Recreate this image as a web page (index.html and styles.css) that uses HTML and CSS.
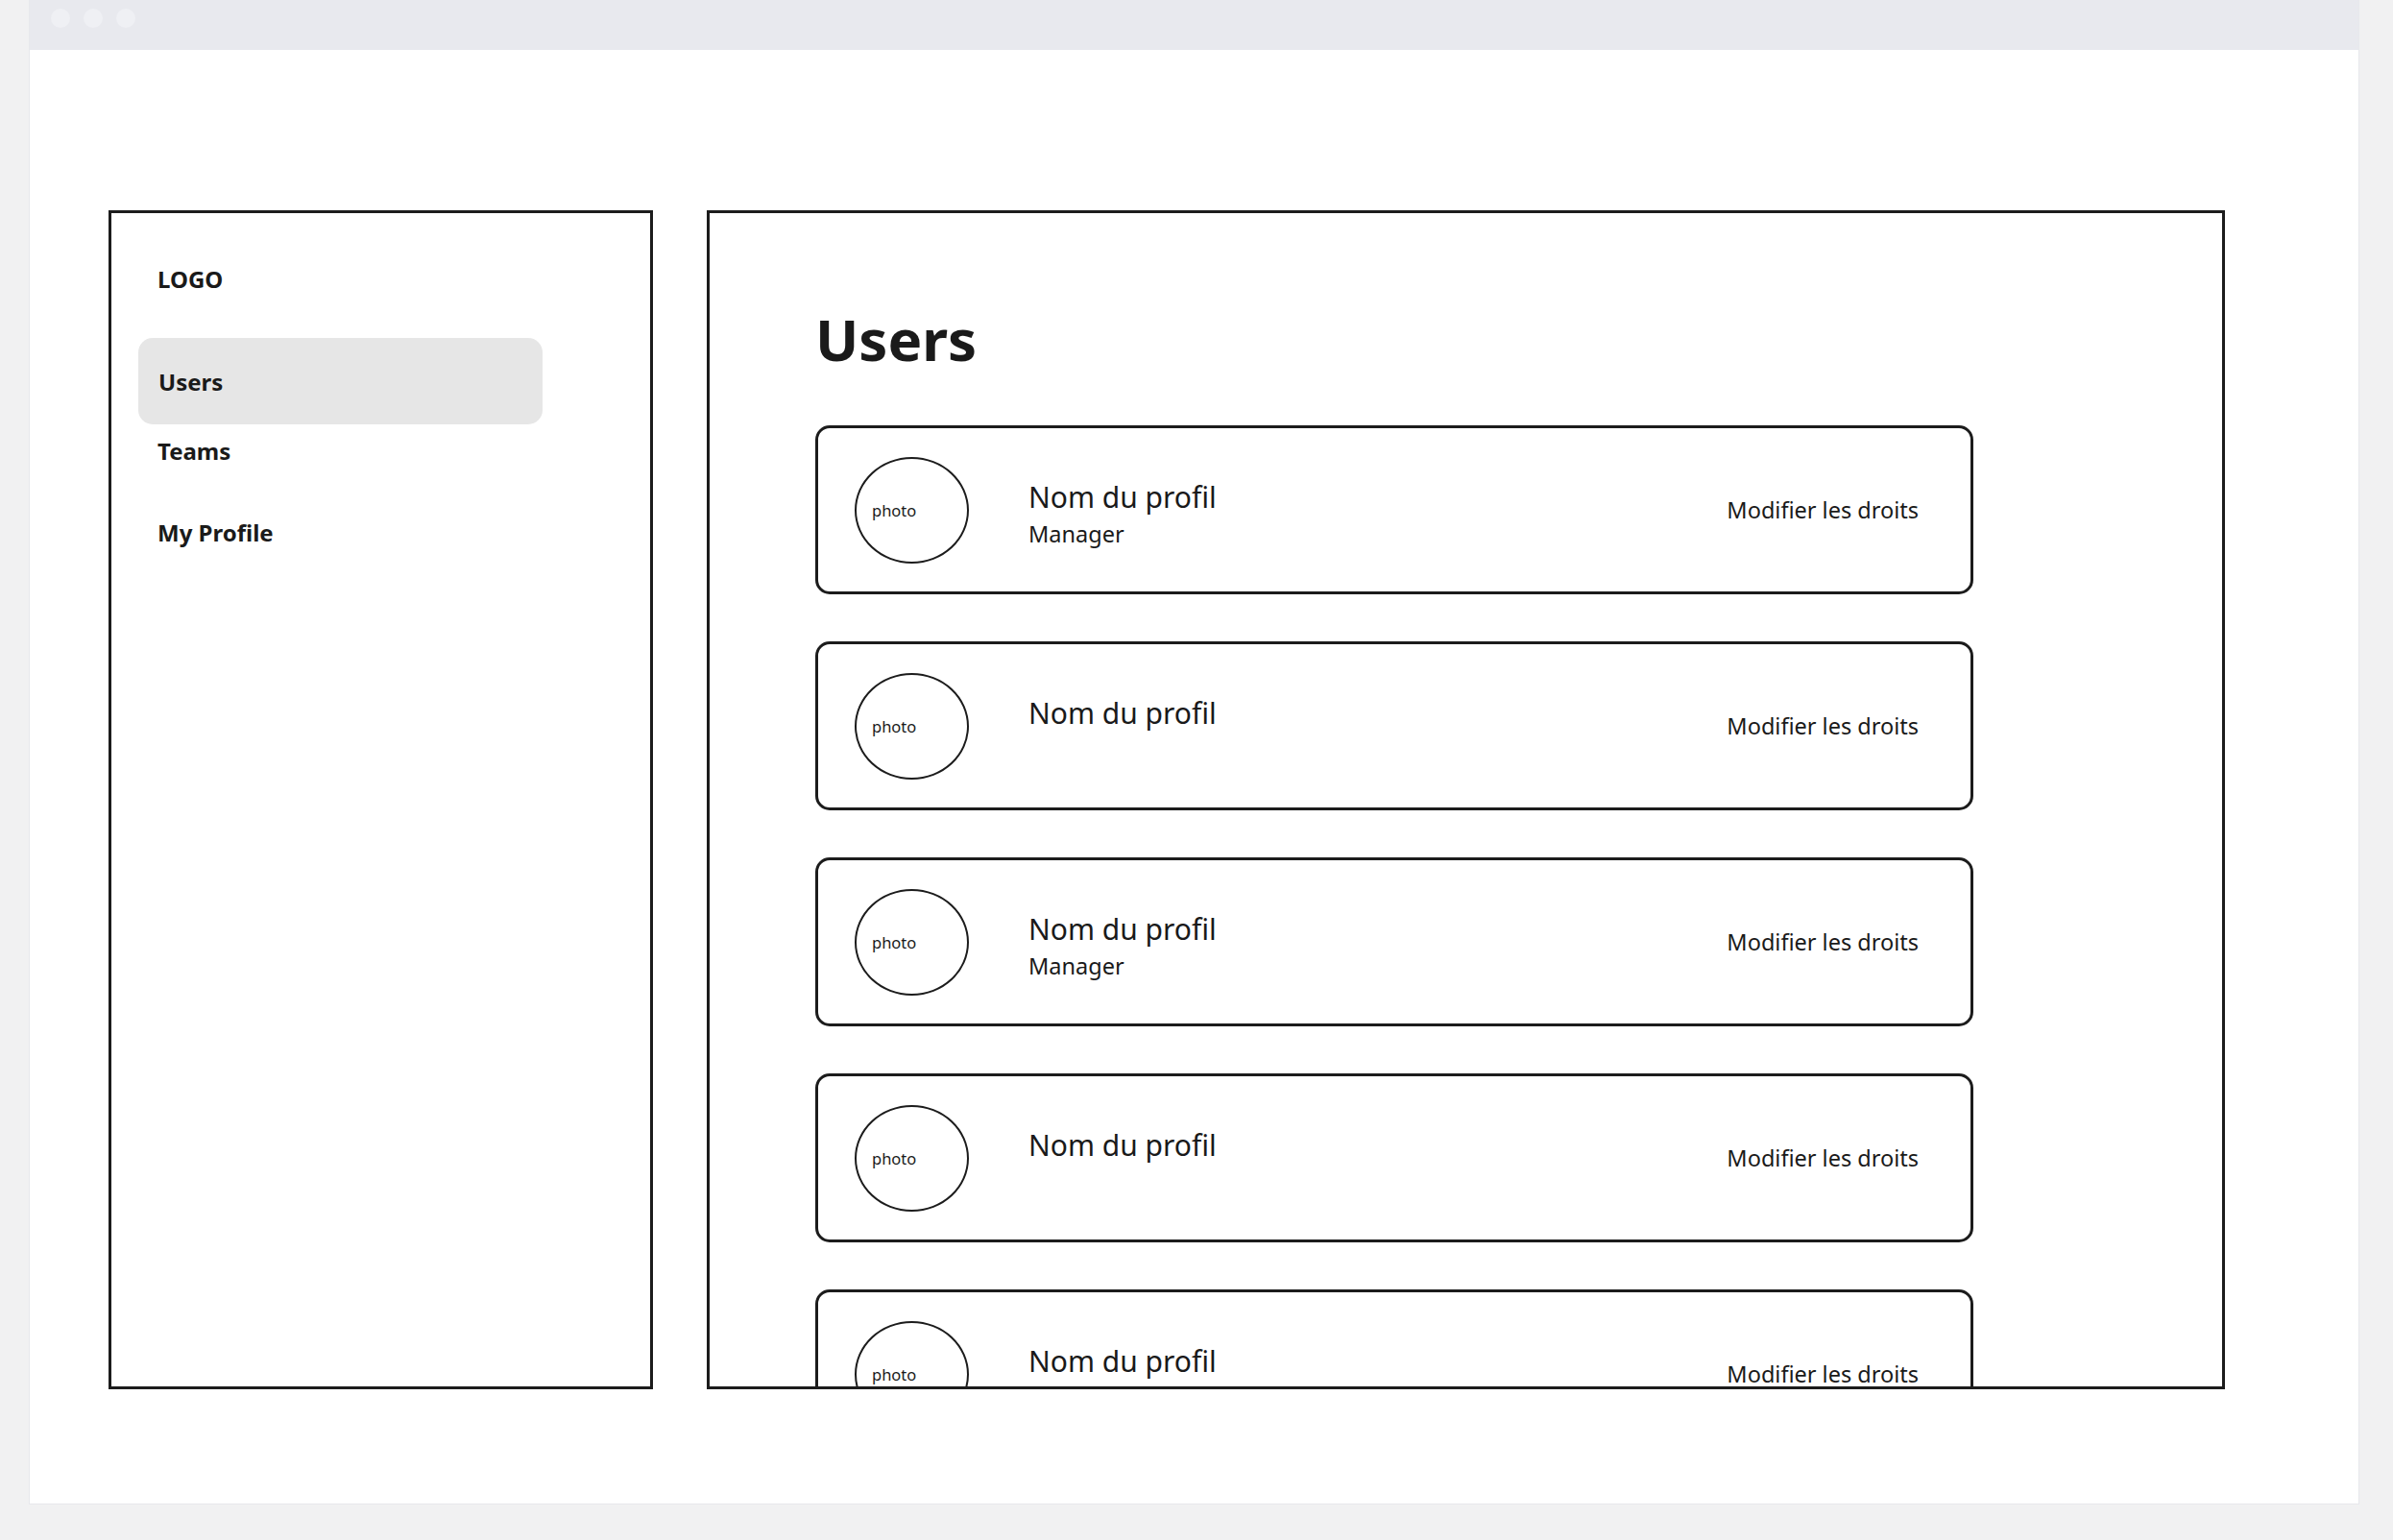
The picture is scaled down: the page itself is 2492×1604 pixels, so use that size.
FILE: index.html
```html
<!doctype html>
<html lang="fr">
	<head>
		<meta charset="UTF-8" />
		<meta name="viewport" content="width=device-width, initial-scale=1.0" />
		<title>Users</title>
		<link rel="stylesheet" href="styles.css">
	</head>

	<body>
		<div class="window">
			<div class="titlebar">
				<span class="dot"></span>
				<span class="dot"></span>
				<span class="dot"></span>
			</div>

			<div class="app">
				<aside class="sidebar">
					<div class="logo">LOGO</div>
					<nav class="nav">
						<a class="nav-item active" href="#">Users</a>
						<a class="nav-item" href="#">Teams</a>
						<a class="nav-item" href="#">My Profile</a>
					</nav>
				</aside>

				<main class="main">
					<h1>Users</h1>

					<div class="user-list">
						<div class="user-card">
							<div class="photo">photo</div>
							<div class="info">
								<div class="name">Nom du profil</div>
								<div class="role">Manager</div>
							</div>
							<a class="rights" href="#">Modifier les droits</a>
						</div>

						<div class="user-card">
							<div class="photo">photo</div>
							<div class="info">
								<div class="name">Nom du profil</div>
							</div>
							<a class="rights" href="#">Modifier les droits</a>
						</div>

						<div class="user-card">
							<div class="photo">photo</div>
							<div class="info">
								<div class="name">Nom du profil</div>
								<div class="role">Manager</div>
							</div>
							<a class="rights" href="#">Modifier les droits</a>
						</div>

						<div class="user-card">
							<div class="photo">photo</div>
							<div class="info">
								<div class="name">Nom du profil</div>
							</div>
							<a class="rights" href="#">Modifier les droits</a>
						</div>

						<div class="user-card">
							<div class="photo">photo</div>
							<div class="info">
								<div class="name">Nom du profil</div>
							</div>
							<a class="rights" href="#">Modifier les droits</a>
						</div>
					</div>
				</main>
			</div>
		</div>
	</body>
</html>
```

FILE: styles.css
```css
body {
	font-family: "Noto Sans", "Open Sans", sans-serif;
	margin: 0;
	background: #f1f1f2;
	color: #1a1a1a;
	height: 1604px;
	overflow: hidden;
}

a {
	color: inherit;
	text-decoration: none;
}

.window {
	margin-left: 31px;
	width: 2425px;
	height: 1566px;
	background: #ffffff;
	box-shadow: 0 0 0 1px #e7e8ec;
	display: flex;
	flex-direction: column;
}

.titlebar {
	height: 52px;
	background: #e8e9ee;
	display: flex;
	align-items: flex-start;
	gap: 14px;
	padding: 9px 0 0 22px;
	box-sizing: border-box;
	flex-shrink: 0;
}

.dot {
	width: 20px;
	height: 20px;
	border-radius: 50%;
	background: #eff0f4;
}

.app {
	display: flex;
	gap: 56px;
	padding: 167px 0 0 82px;
}

/* sidebar */
.sidebar {
	width: 567px;
	height: 1228px;
	box-sizing: border-box;
	border: 3px solid #1c1c1c;
	padding: 52px 0 0 28px;
}

.logo {
	font-size: 24px;
	line-height: 34px;
	font-weight: 700;
	padding-left: 20px;
	margin-bottom: 44px;
}

.nav {
	display: flex;
	flex-direction: column;
}

.nav-item {
	width: 421px;
	box-sizing: border-box;
	font-size: 24px;
	line-height: 34px;
	font-weight: 700;
	padding: 11px 21px 40px 20px;
	border-radius: 15px;
}

.nav-item.active {
	background: #e6e6e6;
	padding: 29px 21px 27px 21px;
}

/* main panel */
.main {
	width: 1581px;
	height: 1228px;
	box-sizing: border-box;
	border: 3px solid #1c1c1c;
	padding: 94px 0 0 110px;
	overflow: hidden;
}

.main h1 {
	margin: 0 0 53px;
	font-size: 60px;
	line-height: 74px;
	font-weight: 700;
}

.user-list {
	display: flex;
	flex-direction: column;
	gap: 49px;
}

.user-card {
	width: 1206px;
	height: 176px;
	box-sizing: border-box;
	border: 3px solid #1c1c1c;
	border-radius: 15px;
	padding: 0 54px 0 38px;
	display: flex;
	align-items: center;
	flex-shrink: 0;
}

.photo {
	width: 119px;
	height: 111px;
	box-sizing: border-box;
	border: 2px solid #1c1c1c;
	border-radius: 50%;
	display: flex;
	align-items: center;
	padding-left: 16px;
	font-size: 16.5px;
	flex-shrink: 0;
}

.info {
	align-self: flex-start;
	padding-top: 54px;
	margin-left: 62px;
	flex: 1;
}

.name {
	font-size: 30px;
	line-height: 36px;
}

.role {
	font-size: 23.5px;
	line-height: 30px;
	margin-top: 5px;
}

.rights {
	font-size: 23.5px;
	line-height: 30px;
}
```
